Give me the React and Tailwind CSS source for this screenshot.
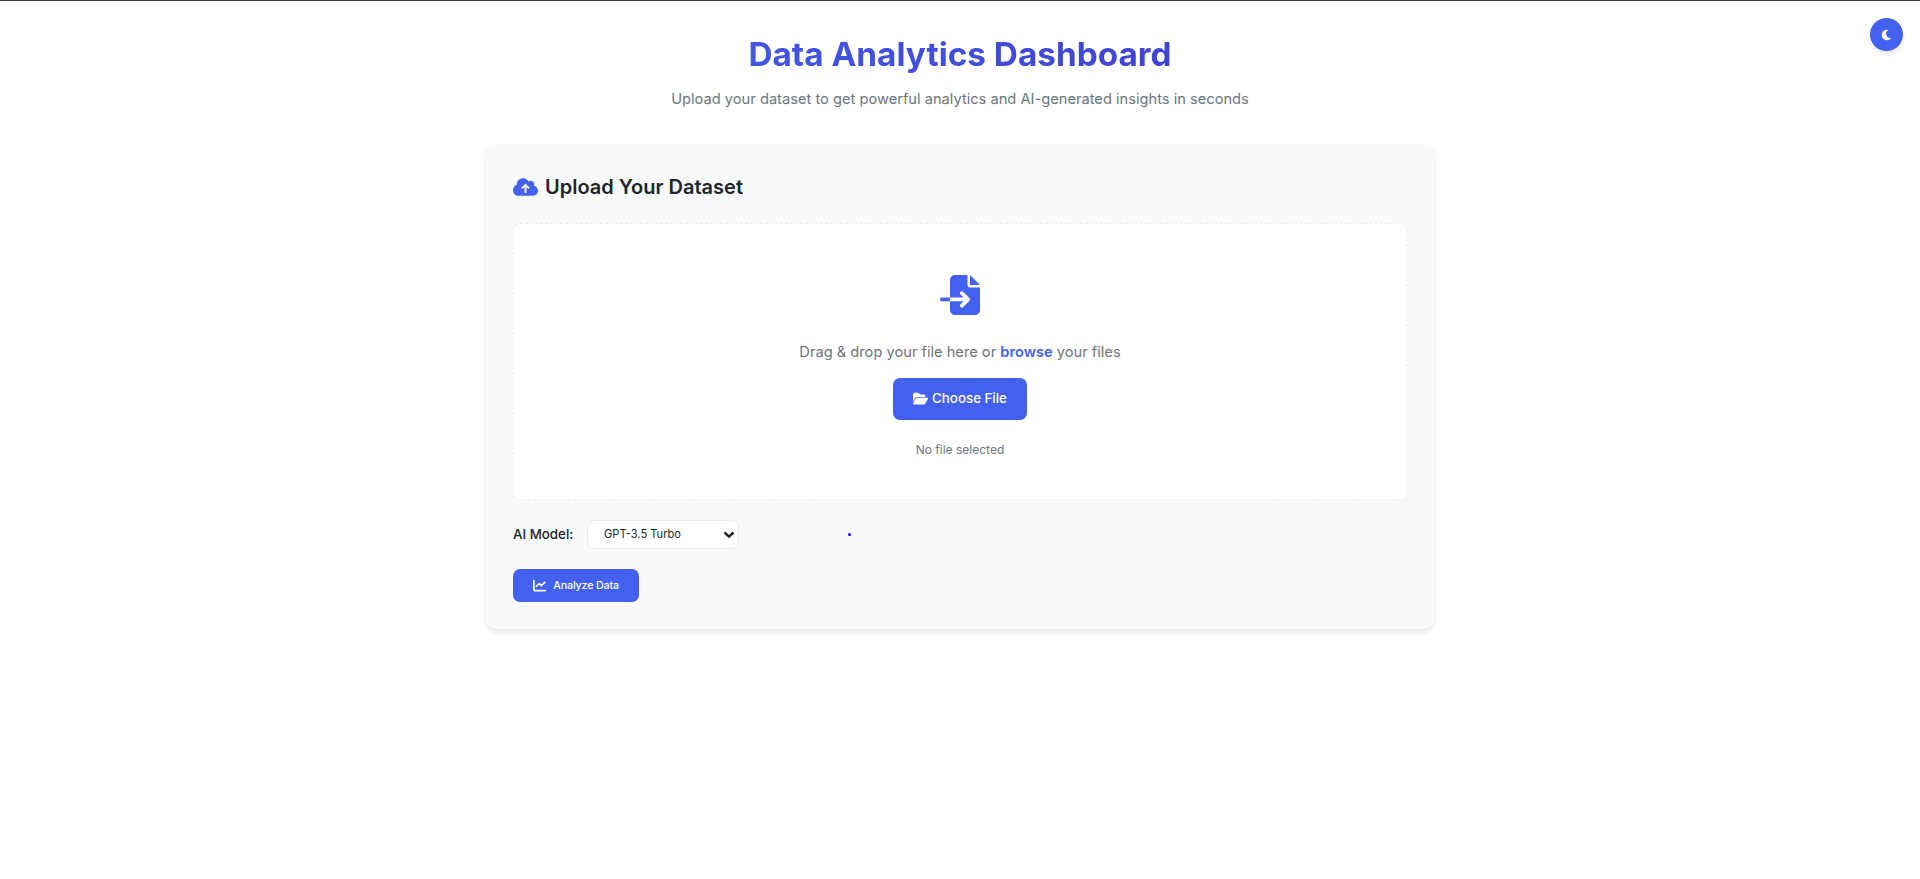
import React from "react";
import { FaCloudArrowUp, FaFileImport, FaFolderOpen, FaChartLine } from "react-icons/fa6";

function MoonIcon() {
  return (
    <svg viewBox="0 0 512 512" className="h-[12px] w-[12px]" fill="currentColor">
      <path d="M32 256c0-123.8 100.3-224 223.8-224c11.36 0 29.7 1.668 40.9 3.746c9.616 1.777 11.75 14.63 3.279 19.44C245 86.5 211.2 144.6 211.2 207.8c0 109.7 99.71 193 208.3 172.3c9.561-1.805 16.28 9.324 10.11 16.95C387.9 448.6 324.8 480 255.8 480C132.1 480 32 379.6 32 256z" />
    </svg>
  );
}

function ThemeToggle() {
  return (
    <button className="absolute right-[17px] top-[17px] flex h-[33px] w-[33px] items-center justify-center rounded-full bg-[#4361ee] text-white shadow-[0_3px_5px_rgba(0,0,0,0.1)]">
      <MoonIcon />
    </button>
  );
}

function Header() {
  return (
    <header className="flex flex-col items-center">
      <h1 className="w-[948px] bg-linear-to-r from-[#4361ee] to-[#3f37c9] bg-clip-text text-center text-[33.333px] leading-[53px] font-bold text-transparent">
        Data Analytics Dashboard
      </h1>
      <p className="mt-[7px] text-[14.667px] leading-[23px] text-[#6c757d]">
        Upload your dataset to get powerful analytics and AI-generated insights in seconds
      </p>
    </header>
  );
}

function DropZone() {
  return (
    <div className="flex h-[277px] flex-col items-center rounded-[7px] border border-dashed border-[#e9ecef] bg-white pt-[51px]">
      <FaFileImport className="h-[40px] w-[40px] text-[#4361ee]" />
      <p className="mt-[26px] text-[14.667px] leading-[23px] text-[#6c757d]">
        Drag &amp; drop your file here or <span className="font-semibold text-[#4361ee]">browse</span> your files
      </p>
      <button className="mt-[14px] flex h-[42px] w-[134px] items-center justify-center gap-[4px] rounded-[7px] bg-[#4361ee] text-[13.333px] font-medium text-white">
        <FaFolderOpen className="h-[13.333px] w-[15px]" />
        Choose File
      </button>
      <p className="mt-[20px] text-[12px] leading-[20px] text-[#6c757d]">No file selected</p>
    </div>
  );
}

function ModelPicker() {
  return (
    <div className="mt-[20px] flex h-[29px] items-center">
      <label className="w-[74px] text-[13.333px] font-medium text-[#212529]">AI Model:</label>
      <div className="grid h-[29px] w-[152px] items-center">
        <select className="col-start-1 row-start-1 h-[29px] w-full appearance-none rounded-[7px] border border-[#e9ecef] bg-white pl-[16px] text-[11.111px] text-[#212529]">
          <option>GPT-3.5 Turbo</option>
        </select>
        <svg viewBox="0 0 12 8" className="pointer-events-none col-start-1 row-start-1 mr-[4px] h-[8px] w-[12px] justify-self-end" fill="none" stroke="#212529" strokeWidth="2.5">
          <path d="M1.5 1.5 L6 5.6 L10.5 1.5" />
        </svg>
      </div>
      <span className="ml-[109px] h-[3px] w-[3px] rounded-full bg-[#1400ff]" />
    </div>
  );
}

export default function App() {
  return (
    <div className="relative min-h-[879px] border-t border-[#3c3c3c] bg-white pt-[27px] font-[Inter,sans-serif] text-[#212529]">
      <ThemeToggle />
      <Header />
      <main className="mx-auto mt-[33px] h-[485px] w-[948px] rounded-[10px] bg-[#f8f9fb] px-[27px] pt-[27px] shadow-[0_3px_5px_rgba(0,0,0,0.1)]">
        <h2 className="flex h-[32px] items-center gap-[7px] text-[20px] font-semibold">
          <FaCloudArrowUp className="h-[20px] w-[25px] text-[#4361ee]" />
          Upload Your Dataset
        </h2>
        <div className="mt-[20px]">
          <DropZone />
        </div>
        <ModelPicker />
        <button className="mt-[20px] flex h-[33px] w-[126px] items-center gap-[7px] rounded-[7px] bg-[#4361ee] pl-[20px] text-[10.7px] font-medium tracking-[-0.15px] text-white">
          <FaChartLine className="h-[13.333px] w-[13.333px]" />
          <span className="pt-[2px]">Analyze Data</span>
        </button>
      </main>
    </div>
  );
}
